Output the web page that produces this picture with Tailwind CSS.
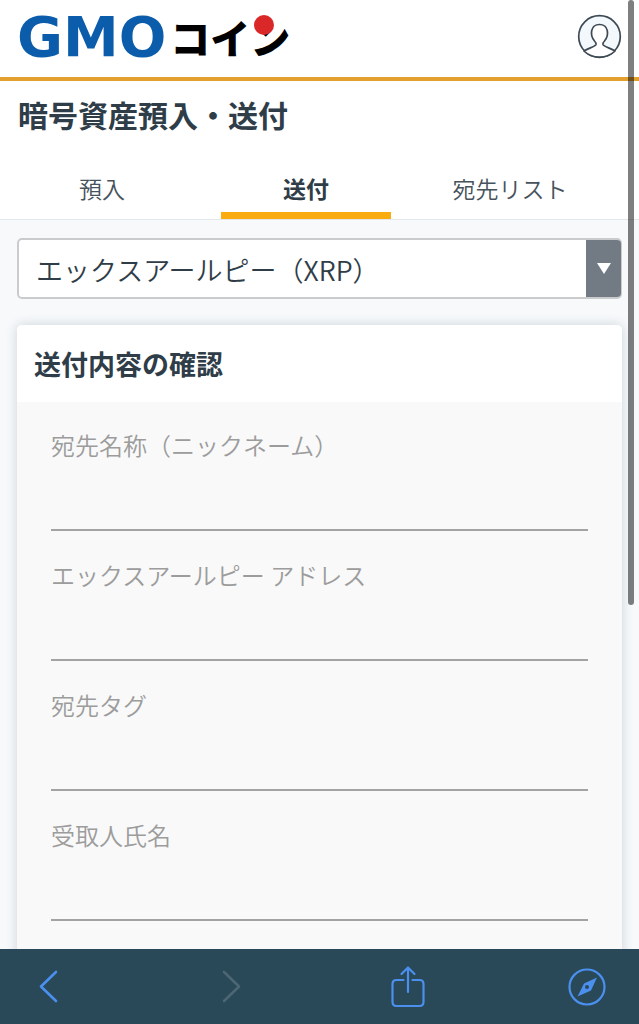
<!DOCTYPE html>
<html lang="ja">
<head>
<meta charset="utf-8">
<meta name="viewport" content="width=device-width, initial-scale=1">
<title>暗号資産預入・送付</title>
<script src="https://cdn.jsdelivr.net/npm/@tailwindcss/browser@4"></script>
</head>
<body class="relative flex h-screen flex-col overflow-hidden bg-[#f7f9fb] font-['Noto_Sans_CJK_JP',sans-serif] text-[#2f3d48]">
  <div class="min-h-0 flex-1 overflow-y-auto [scrollbar-width:none]">
    <header class="flex h-[81px] items-center justify-between border-b-4 border-[#e3a02f] bg-white pr-[17px] pb-1 pl-[17px]">
      <a href="#" class="relative flex items-center gap-1 leading-none">
        <span class="font-['DejaVu_Sans',sans-serif] text-[56px] leading-[52px] font-bold text-[#0b5cab]">GMO</span>
        <span class="text-[40px] leading-[52px] font-black text-black">コイン</span>
        <svg class="absolute top-1 right-4 size-5" viewBox="0 0 20 20" aria-hidden="true"><circle cx="10" cy="10" r="10" fill="#da2828"/></svg>
      </a>
      <button type="button" aria-label="マイページ" class="size-[45px]">
        <svg viewBox="0 0 45 45" fill="none" stroke="#3e4a53" stroke-width="1.7" stroke-linejoin="round">
          <circle cx="22.5" cy="22.5" r="20.8" fill="#f2f8fc"/>
          <path fill="#fff" d="M7 37C11 34 18 33 19 30.500C19.500 29 18.500 28 17.500 27C12.500 21 13.500 10.500 22.500 10.500C31.500 10.500 32.500 21 27.500 27C26.500 28 25.500 29 26 30.500C27 33 34 34 38 37C30 45 15 45 7 37Z"/>
        </svg>
      </button>
    </header>

    <section class="border-b border-[#e3e7ea] bg-white pt-2.5">
      <h1 class="px-[18px] text-[30px] leading-[46px] font-bold">暗号資産預入・送付</h1>
      <nav class="mt-[22px] grid grid-cols-3 pr-[27px] text-center text-[23px] leading-[46px] text-[#46525c]">
        <a href="#" class="h-[60px] pt-1.5 font-[350]">預入</a>
        <a href="#" aria-current="page" class="flex h-[60px] flex-col items-center justify-between pt-1.5 font-bold text-[#2f3d48]">送付<span class="h-[7px] w-5/6 bg-[#f9ab10]"></span></a>
        <a href="#" class="h-[60px] pt-1.5 font-[350]">宛先リスト</a>
      </nav>
    </section>

    <main class="px-[17px] pt-[18px]">
      <div class="relative">
        <select aria-label="銘柄" class="block h-[61px] w-full appearance-none rounded-[5px] border-2 border-[#c9cbcd] bg-white pt-1 pr-10 pl-[17px] text-[27px] font-[350] text-[#2f3d48]">
          <option>エックスアールピー（XRP）</option>
        </select>
        <span class="pointer-events-none absolute inset-y-0.5 right-px flex w-[35px] items-center justify-center rounded-r-[4px] bg-[#727b83]">
          <svg class="h-3 w-3.5" viewBox="0 0 14 12" aria-hidden="true"><path d="M0 0H14L7 11Z" fill="#fff"/></svg>
        </span>
      </div>

      <form class="mt-[26px] rounded-[5px] bg-[#f9f9f9] shadow-[0_0_12px_rgba(40,60,80,0.2)]">
        <h2 class="rounded-t-[5px] bg-white px-[17px] text-[27px] leading-[77px] font-bold">送付内容の確認</h2>
        <div class="flex flex-col gap-[26px] px-[34px] pt-[25px] pb-12">
          <div class="flex flex-col"><label for="nickname" class="text-[24px] leading-9 font-[350] text-[#9c9c9c]">宛先名称（ニックネーム）</label><input id="nickname" type="text" readonly class="h-[68px] w-full border-b-2 border-[#a3a3a3] bg-transparent text-[24px]"></div>
          <div class="flex flex-col"><label for="address" class="text-[24px] leading-9 font-[350] text-[#9c9c9c]">エックスアールピー アドレス</label><input id="address" type="text" readonly class="h-[68px] w-full border-b-2 border-[#a3a3a3] bg-transparent text-[24px]"></div>
          <div class="flex flex-col"><label for="tag" class="text-[24px] leading-9 font-[350] text-[#9c9c9c]">宛先タグ</label><input id="tag" type="text" readonly class="h-[68px] w-full border-b-2 border-[#a3a3a3] bg-transparent text-[24px]"></div>
          <div class="flex flex-col"><label for="recipient" class="text-[24px] leading-9 font-[350] text-[#9c9c9c]">受取人氏名</label><input id="recipient" type="text" readonly class="h-[68px] w-full border-b-2 border-[#a3a3a3] bg-transparent text-[24px]"></div>
        </div>
      </form>
    </main>
  </div>

  <!-- scroll indicator -->
  <div class="pointer-events-none absolute top-0 right-[5px] h-[605px] w-1.5 rounded-full bg-black/50"></div>

  <footer class="relative flex h-[75px] shrink-0 items-center justify-between bg-[#294858] pr-8 pl-[29px]">
    <button type="button" aria-label="戻る" class="size-10">
      <svg viewBox="0 0 40 40" fill="none" stroke="#4b90ee" stroke-width="2.600" stroke-linecap="round" stroke-linejoin="round"><path d="M27 5L12 19.500L27 34"/></svg>
    </button>
    <button type="button" aria-label="進む" class="size-10">
      <svg viewBox="0 0 40 40" fill="none" stroke="#4c6673" stroke-width="2.600" stroke-linecap="round" stroke-linejoin="round"><path d="M16 5L31 19.500L16 34"/></svg>
    </button>
    <button type="button" aria-label="共有" class="h-[44px] w-10">
      <svg viewBox="0 0 40 44" fill="none" stroke="#4b90ee" stroke-width="2.200" stroke-linecap="round" stroke-linejoin="round"><path d="M15.500 15H8.500Q4.500 15 4.500 19V37Q4.500 41 8.500 41H31.500Q35.500 41 35.500 37V19Q35.500 15 31.500 15H24.500M20 27V3M13.500 9L20 2.500L26.500 9"/></svg>
    </button>
    <button type="button" aria-label="ブラウザで開く" class="size-10">
      <svg viewBox="0 0 40 40"><circle cx="20" cy="20" r="17.500" fill="none" stroke="#4b90ee" stroke-width="2.200"/><path fill="#4b90ee" fill-rule="evenodd" d="M30 10.500L24 23.500L10.500 29.500L17 16.500ZM20 18A2 2 0 1 0 20 22A2 2 0 1 0 20 18Z"/></svg>
    </button>
  </footer>
</body>
</html>
